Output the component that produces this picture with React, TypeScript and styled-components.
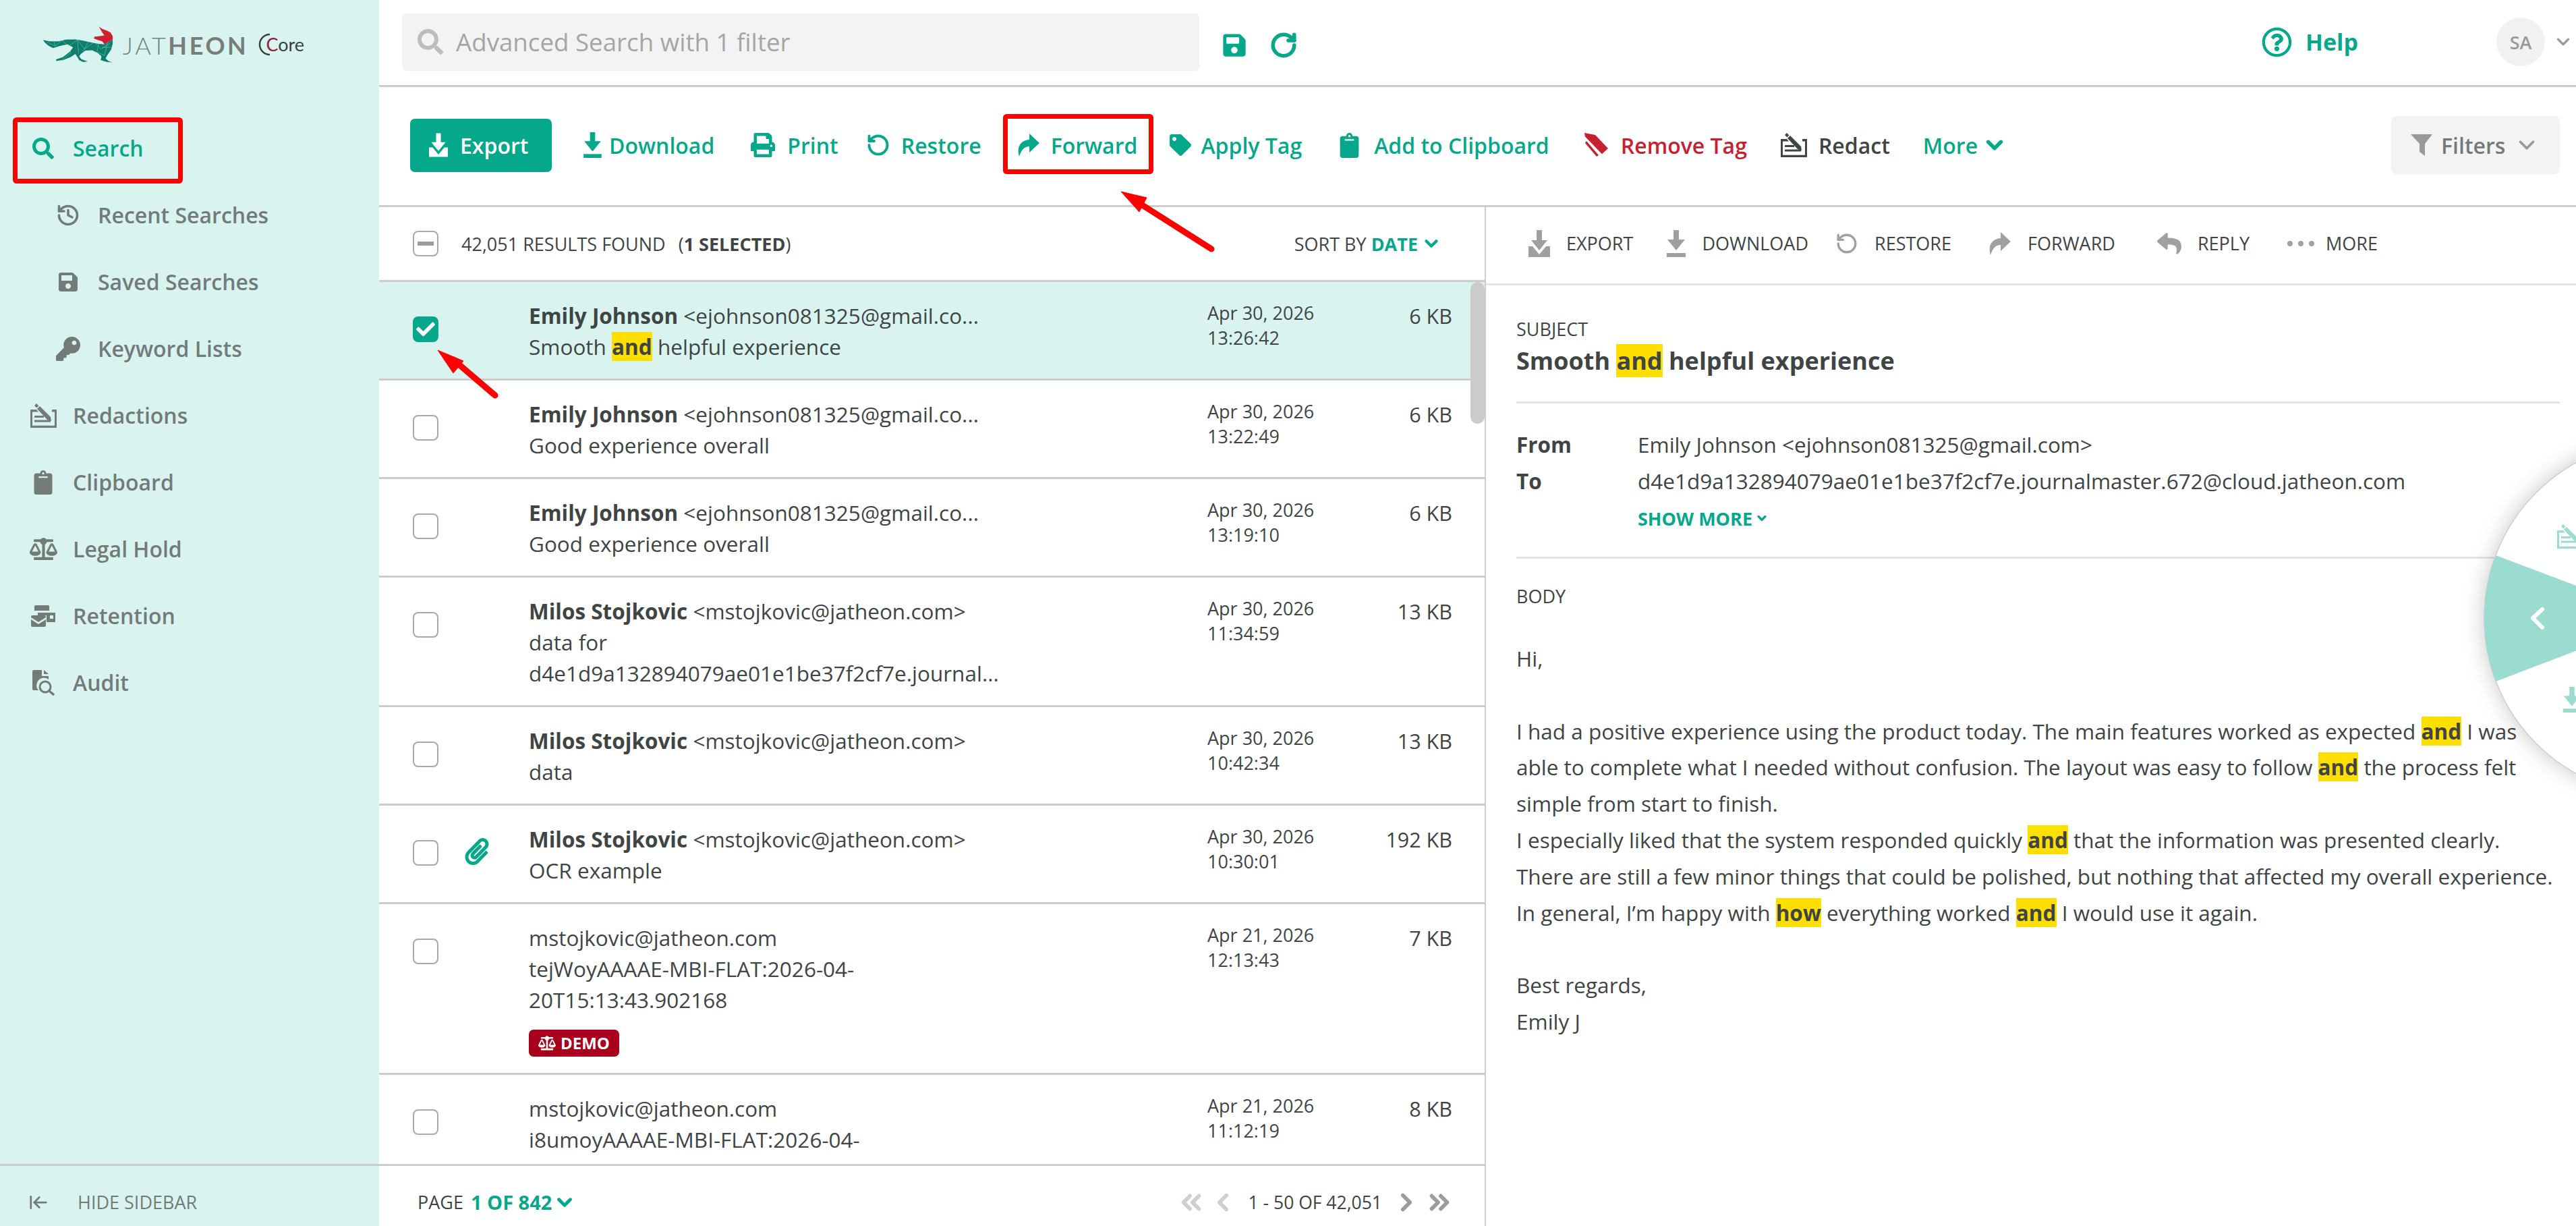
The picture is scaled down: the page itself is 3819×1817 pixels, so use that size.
import React from "react";
import styled, { createGlobalStyle } from "styled-components";
import {
  FaSearch, FaSave, FaKey, FaClipboard, FaBalanceScale, FaTag, FaPrint, FaReply,
  FaPaperclip, FaCheck, FaRegQuestionCircle,
} from "react-icons/fa";
import { History, RotateCcw, RotateCw, ChevronDown, ChevronLeft, ChevronRight, ChevronsLeft, ChevronsRight, ArrowLeftToLine } from "lucide-react";

const GREEN = "#05a88b";
const MINT = "#d9f4ef";
const LINE = "#cccccc";
const INK = "#3f4444";
const GRAY = "#737b7a";

const Global = createGlobalStyle`
  html, body { margin: 0; padding: 0; background: #fff; overflow: hidden; }
  body { font-family: "Open Sans", "Liberation Sans", sans-serif; color: ${INK}; }
  * { box-sizing: border-box; }
`;

type P = React.SVGProps<SVGSVGElement>;
const ExportIcon = (p: P) => (
  <svg viewBox="0 0 32 40" width="28" height="36" fill="currentColor" {...p}>
    <path d="M12 0h8v15h8L16 30 4 15h8z" />
    <path d="M0 24h6l10 12 10-12h6v16H0z" />
  </svg>
);
const DownloadIcon = (p: P) => (
  <svg viewBox="0 0 28 40" width="28" height="40" fill="currentColor" {...p}>
    <path d="M10 0h8v14h9L14 30 1 14h9z" />
    <rect x="0" y="34" width="28" height="6" />
  </svg>
);
const ForwardIcon = (p: P) => (
  <svg viewBox="0 0 33 36" width="33" height="36" fill="currentColor" {...p}>
    <path d="M2 35C-2 22 3 11 17 10V1l15 14-15 14v-9c-7 0-12 5-15 15z" />
  </svg>
);
const RedactIcon = (p: P) => (
  <svg viewBox="0 0 41 36" width="41" height="36" fill="currentColor" {...p}>
    <path d="M1 9h9l3 3.4H4v20.400h33V12.400h-4V9h7v27H1z" />
    <path d="M7 3l3-3 3.400 3.400-3 3zM11 8l4-4 16 16 1 6-6-2z" />
    <rect x="7" y="18" width="14" height="3" />
    <rect x="7" y="24.500" width="24" height="3" />
  </svg>
);
const RetentionIcon = (p: P) => (
  <svg viewBox="0 0 36 32" width="36" height="32" fill="currentColor" {...p}>
    <path d="M5 2a2 2 0 012-2h18a2 2 0 012 2v6H5z" />
    <path d="M10 11h26v14H23V15H10zM28 15v5h5v-5z" fillRule="evenodd" />
    <path d="M0 17a2 2 0 012-2h18a2 2 0 012 2v1l-11 7L0 18z" />
    <path d="M0 21l11 7 11-7v9a2 2 0 01-2 2H2a2 2 0 01-2-2z" />
  </svg>
);
const AuditIcon = (p: P) => (
  <svg viewBox="0 0 33 38" width="33" height="38" fill="currentColor" {...p}>
    <path d="M0 2a2 2 0 012-2h12v9h10v5A11 11 0 009 30H2a2 2 0 01-2-2z" />
    <path d="M17 0l7 6h-7z" />
    <circle cx="19" cy="25" r="8" fill="none" stroke="currentColor" strokeWidth="3" />
    <path d="M25 31l7 6" stroke="currentColor" strokeWidth="3.500" />
  </svg>
);
const RemoveTagIcon = (p: P) => (
  <svg viewBox="0 0 37 36" width="37" height="36" fill="currentColor" {...p}>
    <path d="M1 0l16 3 19 20-11 10L3 12z" />
    <path d="M0 7l28 29" stroke="#fff" strokeWidth="5" />
    <path d="M2 15l17 20 3-2L4 12z" />
  </svg>
);
const FilterIcon = (p: P) => (
  <svg viewBox="0 0 32 32" width="32" height="32" fill="currentColor" {...p}>
    <path d="M0 0h32L21 14v18l-8-6V14z" />
  </svg>
);
const FOX =
  "M60 102L90 108 130 108 165 100 205 99 240 105 270 112 300 118 335 122 372 100 372 120 365 145 345 175 340 185 355 197 373 203 345 200 318 192 322 175 305 160 280 148 250 150 230 165 222 175 232 188 260 198 240 201 222 192 212 175 205 165 185 178 150 192 120 196 118 190 150 178 180 155 195 135 170 122 140 128 105 138 85 128 70 115Z";
const FoxLogo = () => (
  <svg viewBox="50 35 330 175" width="110" height="58">
    <defs>
      <clipPath id="fox"><path d={FOX} /></clipPath>
    </defs>
    <g clipPath="url(#fox)">
      <rect x="50" y="35" width="330" height="175" fill="#0f7f6d" />
      <path d="M80 112l35 18 30-26 30 26 40-28 30 40 45-30 30 30 40-25M115 130l-6-22M175 130l10 30-40 30M215 102l5 60M265 108l-25 45M310 118l-10 45M350 112l-15 60 -30-15M365 135l-40 0" stroke="#7fcfc0" strokeWidth="1.600" fill="none" />
    </g>
    <path d="M310 42L325 52 345 60 362 68 372 85 372 100 335 122 325 108 305 102 288 95 290 88 315 85 335 82 325 68Z" fill="#d0202f" strokeLinejoin="round" />
  </svg>
);

const Root = styled.div`
  position: relative;
  display: flex;
  width: 3819px;
  height: 1817px;
  overflow: hidden;
  background: #fff;
`;

/* Sidebar */
const Sidebar = styled.aside`
  flex: 0 0 562px;
  display: flex;
  flex-direction: column;
  background: ${MINT};
`;
const Logo = styled.div`
  height: 170px;
  padding: 37px 0 0 60px;
  display: flex;
  align-items: flex-start;
`;
const Brand = styled.div`
  margin: 12px 0 0 12px;
  font-family: Lato, "Open Sans", sans-serif;
  font-size: 36px;
  line-height: 36px;
  letter-spacing: 3.6px;
  color: #777d7c;
  font-weight: 300;
  b { font-weight: 700; }
`;
const CoreMark = styled.div`
  position: relative;
  margin: 9px 0 0 12px;
  padding-left: 14px;
  font-family: Lato, "Open Sans", sans-serif;
  font-size: 27px;
  line-height: 40px;
  color: #3a3f40;
  i { font-style: normal; color: #8e2038; }
  svg { position: absolute; left: 0; top: 3px; }
`;
const Nav = styled.nav`
  flex: 1;
`;
const NavItem = styled.div<{ $sub?: boolean; $active?: boolean }>`
  height: 99px;
  display: flex;
  align-items: center;
  gap: 16px;
  padding-left: ${(p) => (p.$sub ? "73px" : "36px")};
  font-size: 32px;
  font-weight: 600;
  color: ${(p) => (p.$active ? GREEN : GRAY)};
`;
const NavIcon = styled.span`
  flex: 0 0 56px;
  display: flex;
  justify-content: center;
  align-items: center;
`;
const SideFoot = styled.div`
  height: 92px;
  border-top: 3px solid ${LINE};
  display: flex;
  align-items: center;
  gap: 43px;
  padding: 18px 0 0 42px;
  font-size: 27px;
  color: ${GRAY};
`;

/* Main */
const Main = styled.main`
  flex: 1;
  min-width: 0;
  display: flex;
  flex-direction: column;
`;
const Header = styled.header`
  flex: 0 0 129px;
  display: flex;
  align-items: center;
  padding: 0 4px 2px 34px;
  border-bottom: 3px solid ${LINE};
`;
const SearchBox = styled.div`
  width: 1182px;
  height: 85px;
  background: #f3f3f3;
  border-radius: 7px;
  display: flex;
  align-items: center;
  gap: 19px;
  padding-left: 23px;
  font-size: 36.700px;
  color: #a3a6a6;
  svg { color: #bdbdbd; }
`;
const HeadAction = styled.span<{ $ml: number }>`
  display: flex;
  margin: 10px 0 0 ${(p) => p.$ml}px;
  color: ${GREEN};
`;
const Help = styled.div`
  margin-left: auto;
  display: flex;
  align-items: center;
  gap: 20px;
  font-size: 34px;
  font-weight: 700;
  color: ${GREEN};
`;
const Avatar = styled.div`
  margin-left: 205px;
  width: 72px;
  height: 72px;
  border-radius: 50%;
  background: #f1f1f1;
  color: #999;
  font-size: 27px;
  font-weight: 600;
  display: flex;
  align-items: center;
  justify-content: center;
`;
const AvatarCaret = styled.span`
  display: flex;
  margin-left: 12px;
  color: #999;
`;

const Toolbar = styled.div`
  flex: 0 0 178px;
  display: flex;
  align-items: center;
  padding: 0 24px 3px 46px;
  border-bottom: 3px solid ${LINE};
`;
const ExportBtn = styled.div`
  width: 210px;
  height: 79px;
  border-radius: 7px;
  background: ${GREEN};
  color: #fff;
  font-size: 32px;
  font-weight: 600;
  display: flex;
  align-items: center;
  gap: 18px;
  padding-left: 28px;
`;
const Tool = styled.div<{ $ml: number; $tone?: string; $gap?: number }>`
  display: flex;
  align-items: center;
  gap: ${(p) => p.$gap ?? 18}px;
  margin-left: ${(p) => p.$ml}px;
  font-size: 32px;
  font-weight: 600;
  color: ${(p) => p.$tone || GREEN};
  white-space: nowrap;
`;
const FilterBtn = styled.div`
  margin-left: auto;
  width: 250px;
  height: 86px;
  border-radius: 8px;
  background: #f3f3f3;
  color: ${GRAY};
  font-size: 32px;
  font-weight: 600;
  display: flex;
  align-items: center;
  gap: 13px;
  padding-left: 29px;
  svg { color: #999; }
`;

const Panes = styled.div`
  flex: 1;
  min-height: 0;
  display: flex;
`;
const ListPane = styled.section`
  flex: 0 0 1641px;
  display: flex;
  flex-direction: column;
  border-right: 2px solid ${LINE};
`;
const ListHead = styled.div`
  flex: 0 0 111px;
  display: flex;
  align-items: center;
  padding: 0 64px 0 50px;
  border-bottom: 3px solid ${LINE};
  font-size: 27px;
`;
const CheckBox = styled.span<{ $on?: boolean }>`
  width: 38px;
  height: 38px;
  border-radius: 8px;
  display: flex;
  align-items: center;
  justify-content: center;
  border: ${(p) => (p.$on ? "none" : "2px solid #a9a9a9")};
  background: ${(p) => (p.$on ? GREEN : "#fff")};
  color: #fff;
`;
const Dash = styled.i`
  width: 24px;
  height: 6px;
  background: #9c9c9c;
`;
const Count = styled.div`
  margin-left: 34px;
  white-space: pre;
`;
const Selected = styled.span`
  margin-left: 5px;
  b { font-weight: 700; }
`;
const Sort = styled.div`
  margin-left: auto;
  display: flex;
  align-items: center;
  gap: 7px;
  b { font-weight: 700; color: ${GREEN}; }
  svg { color: ${GREEN}; margin-left: -2px; }
`;
const Rows = styled.div`
  position: relative;
  flex: 1;
  min-height: 0;
  overflow: hidden;
`;
const Row = styled.article<{ $on?: boolean }>`
  display: grid;
  grid-template-columns: 38px 134px 1006px 190px 1fr;
  padding: 27px 48px 24px 50px;
  border-bottom: 3px solid ${LINE};
  background: ${(p) => (p.$on ? MINT : "#fff")};
`;
const CheckCol = styled.div`
  padding-top: 24px;
`;
const AttachCol = styled.div`
  padding: 21px 0 0 37px;
  color: ${GREEN};
`;
const TextCol = styled.div`
  font-size: 31.500px;
  line-height: 46px;
`;
const Sender = styled.div`
  white-space: nowrap;
  b { font-weight: 700; }
`;
const Subject = styled.div`
  max-width: 710px;
  overflow-wrap: anywhere;
`;
const Hit = styled.mark`
  background: #ffdf00;
  color: ${INK};
  font-weight: 700;
`;
const Badge = styled.div`
  display: inline-flex;
  align-items: center;
  gap: 7px;
  height: 40px;
  margin-top: 21px;
  padding: 0 14px;
  border-radius: 7px;
  background: #a9001e;
  color: #fff;
  font-size: 24px;
  font-weight: 700;
  line-height: 40px;
  vertical-align: top;
`;
const DateCol = styled.div`
  font-size: 27px;
  line-height: 37px;
`;
const SizeCol = styled.div`
  text-align: right;
  font-size: 30.500px;
  line-height: 46px;
`;
const ScrollThumb = styled.div`
  position: absolute;
  right: 0;
  top: 0;
  width: 21px;
  height: 210px;
  border-radius: 11px;
  background: #cbcbcb;
`;
const ListFoot = styled.div`
  flex: 0 0 92px;
  border-top: 3px solid ${LINE};
  display: flex;
  align-items: center;
  padding: 18px 44px 0 57px;
  font-size: 27px;
`;
const PageNo = styled.b`
  margin: 0 2px 0 11px;
  font-size: 29px;
  font-weight: 700;
  color: ${GREEN};
`;
const Pager = styled.div`
  margin-left: auto;
  display: flex;
  align-items: center;
  font-size: 26.500px;
`;
const PagerIcon = styled.span<{ $off?: boolean; $ml?: number }>`
  display: flex;
  margin-left: ${(p) => p.$ml ?? 0}px;
  color: ${(p) => (p.$off ? "#cfcfcf" : "#9c9c9c")};
`;
const PagerRange = styled.span`
  margin-left: 17px;
`;

/* Detail */
const Detail = styled.section`
  position: relative;
  flex: 1;
  min-width: 0;
`;
const DetailHead = styled.div`
  height: 116px;
  display: flex;
  align-items: center;
  padding: 0 0 6px 63px;
  border-bottom: 3px solid #e5e5e5;
  font-size: 27px;
`;
const DTool = styled.div<{ $ml: number }>`
  display: flex;
  align-items: center;
  gap: 24px;
  margin-left: ${(p) => p.$ml}px;
  white-space: nowrap;
  svg { color: #a0a0a0; }
`;
const MoreLabel = styled.span`
  margin-left: -8px;
`;
const DetailBody = styled.div`
  padding: 0 24px 0 45px;
`;
const Section = styled.div`
  border-bottom: 3px solid #e5e5e5;
`;
const SubjectSec = styled(Section)`
  padding: 47px 0 35px;
`;
const Label = styled.div`
  font-size: 27px;
  line-height: 36px;
`;
const Title = styled.h1`
  margin: 4px 0 0;
  font-size: 36px;
  line-height: 50px;
  font-weight: 700;
`;
const MetaSec = styled(Section)`
  padding: 34px 0 37px;
`;
const Meta = styled.div`
  display: grid;
  grid-template-columns: 180px 1fr;
  font-size: 31.500px;
  line-height: 54px;
  b { font-weight: 700; }
`;
const ShowMore = styled.div`
  margin: 8px 0 0 180px;
  display: flex;
  align-items: center;
  gap: 4px;
  height: 40px;
  font-size: 27px;
  font-weight: 700;
  color: ${GREEN};
`;
const BodySec = styled.div`
  padding-top: 38px;
`;
const BodyText = styled.div`
  margin-top: 47px;
  font-size: 31.500px;
  line-height: 53.800px;
  white-space: nowrap;
`;

const Wheel = styled.svg`
  position: absolute;
  right: 0;
  top: 299px;
  overflow: hidden;
`;
const WheelDisc = styled.circle`
  fill: #fff;
  stroke: #cfcfcf;
  stroke-width: 1.500;
  filter: drop-shadow(0 0 16px rgba(0, 0, 0, 0.22));
`;
const Marks = styled.svg`
  position: absolute;
  inset: 0;
  pointer-events: none;
`;

const tools = [
  { ml: 47, gap: 11, icon: <DownloadIcon width={27} height={38} />, label: "Download" },
  { ml: 54, icon: <FaPrint size={36} />, label: "Print" },
  { ml: 41, gap: 16, icon: <RotateCcw size={36} strokeWidth={2.6} />, label: "Restore" },
  { ml: 54, gap: 16, icon: <ForwardIcon />, label: "Forward" },
  { ml: 48, gap: 14, icon: <FaTag size={32} />, label: "Apply Tag" },
  { ml: 52, icon: <FaClipboard size={37} />, label: "Add to Clipboard" },
  { ml: 51, icon: <RemoveTagIcon />, label: "Remove Tag", tone: "#c8202f" },
  { ml: 49, gap: 16, icon: <RedactIcon />, label: "Redact", tone: INK },
];

const dtools = [
  { ml: 0, icon: <ExportIcon width={32} height={40} />, label: "EXPORT" },
  { ml: 50, icon: <DownloadIcon />, label: "DOWNLOAD" },
  { ml: 40, icon: <RotateCcw size={34} strokeWidth={2.4} />, label: "RESTORE" },
  { ml: 56, icon: <ForwardIcon />, label: "FORWARD" },
  { ml: 62, icon: <FaReply size={36} />, label: "REPLY" },
];

type R = {
  name?: string; addr: string; subject: React.ReactNode; date: string; time: string; size: string;
  on?: boolean; clip?: boolean; demo?: boolean;
};
const rows: R[] = [
  { name: "Emily Johnson", addr: "<ejohnson081325@gmail.co...", subject: <>Smooth <Hit>and</Hit> helpful experience</>, date: "Apr 30, 2026", time: "13:26:42", size: "6 KB", on: true },
  { name: "Emily Johnson", addr: "<ejohnson081325@gmail.co...", subject: "Good experience overall", date: "Apr 30, 2026", time: "13:22:49", size: "6 KB" },
  { name: "Emily Johnson", addr: "<ejohnson081325@gmail.co...", subject: "Good experience overall", date: "Apr 30, 2026", time: "13:19:10", size: "6 KB" },
  { name: "Milos Stojkovic", addr: "<mstojkovic@jatheon.com>", subject: "data for d4e1d9a132894079ae01e1be37f2cf7e.journal...", date: "Apr 30, 2026", time: "11:34:59", size: "13 KB" },
  { name: "Milos Stojkovic", addr: "<mstojkovic@jatheon.com>", subject: "data", date: "Apr 30, 2026", time: "10:42:34", size: "13 KB" },
  { name: "Milos Stojkovic", addr: "<mstojkovic@jatheon.com>", subject: "OCR example", date: "Apr 30, 2026", time: "10:30:01", size: "192 KB", clip: true },
  { addr: "mstojkovic@jatheon.com", subject: "tejWoyAAAAE-MBI-FLAT:2026-04-20T15:13:43.902168", date: "Apr 21, 2026", time: "12:13:43", size: "7 KB", demo: true },
  { addr: "mstojkovic@jatheon.com", subject: "i8umoyAAAAE-MBI-FLAT:2026-04-20T14:10:10.097784", date: "Apr 21, 2026", time: "11:12:19", size: "8 KB" },
];

export default function App() {
  return (
    <Root>
      <Global />
      <Sidebar>
        <Logo>
          <FoxLogo />
          <Brand>JAT<b>HEON</b></Brand>
          <CoreMark>
            <svg width="22" height="34" viewBox="0 0 22 34"><path d="M20 2A15 15 0 0020 32" fill="none" stroke="#3a3f40" strokeWidth="2.500" /></svg>
            <i>C</i>ore
          </CoreMark>
        </Logo>
        <Nav>
          <NavItem $active><NavIcon><FaSearch size={32} /></NavIcon>Search</NavItem>
          <NavItem $sub><NavIcon><History size={36} strokeWidth={2.4} /></NavIcon>Recent Searches</NavItem>
          <NavItem $sub><NavIcon><FaSave size={32} /></NavIcon>Saved Searches</NavItem>
          <NavItem $sub><NavIcon><FaKey size={36} /></NavIcon>Keyword Lists</NavItem>
          <NavItem><NavIcon><RedactIcon /></NavIcon>Redactions</NavItem>
          <NavItem><NavIcon><FaClipboard size={36} /></NavIcon>Clipboard</NavItem>
          <NavItem><NavIcon><FaBalanceScale size={41} /></NavIcon>Legal Hold</NavItem>
          <NavItem><NavIcon><RetentionIcon /></NavIcon>Retention</NavItem>
          <NavItem><NavIcon><AuditIcon /></NavIcon>Audit</NavItem>
        </Nav>
        <SideFoot><ArrowLeftToLine size={30} strokeWidth={2.2} />HIDE SIDEBAR</SideFoot>
      </Sidebar>

      <Main>
        <Header>
          <SearchBox><FaSearch size={38} />Advanced Search with 1 filter</SearchBox>
          <HeadAction $ml={33}><FaSave size={38} /></HeadAction>
          <HeadAction $ml={33}><RotateCw size={42} strokeWidth={3.2} /></HeadAction>
          <Help><FaRegQuestionCircle size={45} />Help</Help>
          <Avatar>SA</Avatar>
          <AvatarCaret><ChevronDown size={30} strokeWidth={2.6} /></AvatarCaret>
        </Header>

        <Toolbar>
          <ExportBtn><ExportIcon />Export</ExportBtn>
          {tools.map((t) => (
            <Tool key={t.label} $ml={t.ml} $gap={t.gap} $tone={t.tone}>{t.icon}{t.label}</Tool>
          ))}
          <Tool $ml={49} $gap={6}>More<ChevronDown size={38} strokeWidth={3.4} /></Tool>
          <FilterBtn><FilterIcon />Filters<ChevronDown size={38} strokeWidth={2.4} /></FilterBtn>
        </Toolbar>

        <Panes>
          <ListPane>
            <ListHead>
              <CheckBox><Dash /></CheckBox>
              <Count>42,051 RESULTS FOUND  <Selected>(<b>1 SELECTED</b>)</Selected></Count>
              <Sort>SORT BY <b>DATE</b><ChevronDown size={30} strokeWidth={3.4} /></Sort>
            </ListHead>
            <Rows>
              {rows.map((r, i) => (
                <Row key={i} $on={r.on}>
                  <CheckCol>
                    <CheckBox $on={r.on}>{r.on && <FaCheck size={28} />}</CheckBox>
                  </CheckCol>
                  <AttachCol>{r.clip && <FaPaperclip size={40} />}</AttachCol>
                  <TextCol>
                    <Sender>{r.name && <b>{r.name} </b>}{r.addr}</Sender>
                    <Subject>{r.subject}</Subject>
                    {r.demo && <Badge><FaBalanceScale size={26} />DEMO</Badge>}
                  </TextCol>
                  <DateCol>{r.date}<br />{r.time}</DateCol>
                  <SizeCol>{r.size}</SizeCol>
                </Row>
              ))}
              <ScrollThumb />
            </Rows>
            <ListFoot>
              PAGE <PageNo>1 OF 842</PageNo>
              <ChevronDown size={34} strokeWidth={3.4} color={GREEN} />
              <Pager>
                <PagerIcon $off><ChevronsLeft size={46} strokeWidth={3} /></PagerIcon>
                <PagerIcon $off $ml={3}><ChevronLeft size={42} strokeWidth={3.2} /></PagerIcon>
                <PagerRange>1 - 50 OF 42,051</PagerRange>
                <PagerIcon $ml={15}><ChevronRight size={42} strokeWidth={3.2} /></PagerIcon>
                <PagerIcon $ml={5}><ChevronsRight size={46} strokeWidth={3} /></PagerIcon>
              </Pager>
            </ListFoot>
          </ListPane>

          <Detail>
            <DetailHead>
              {dtools.map((t) => (
                <DTool key={t.label} $ml={t.ml}>{t.icon}{t.label}</DTool>
              ))}
              <DTool $ml={55}>
                <svg width="42" height="10" viewBox="0 0 42 10" fill="currentColor"><circle cx="5" cy="5" r="4" /><circle cx="21" cy="5" r="4" /><circle cx="37" cy="5" r="4" /></svg>
                <MoreLabel>MORE</MoreLabel>
              </DTool>
            </DetailHead>
            <DetailBody>
              <SubjectSec>
                <Label>SUBJECT</Label>
                <Title>Smooth <Hit>and</Hit> helpful experience</Title>
              </SubjectSec>
              <MetaSec>
                <Meta><b>From</b><span>Emily Johnson &lt;ejohnson081325@gmail.com&gt;</span></Meta>
                <Meta><b>To</b><span>d4e1d9a132894079ae01e1be37f2cf7e.journalmaster.672@cloud.jatheon.com</span></Meta>
                <ShowMore>SHOW MORE<ChevronDown size={20} strokeWidth={4} /></ShowMore>
              </MetaSec>
              <BodySec>
                <Label>BODY</Label>
                <BodyText>
                  Hi,<br /><br />
                  I had a positive experience using the product today. The main features worked as expected <Hit>and</Hit> I was<br />
                  able to complete what I needed without confusion. The layout was easy to follow <Hit>and</Hit> the process felt<br />
                  simple from start to finish.<br />
                  I especially liked that the system responded quickly <Hit>and</Hit> that the information was presented clearly.<br />
                  There are still a few minor things that could be polished, but nothing that affected my overall experience.<br />
                  In general, I’m happy with <Hit>how</Hit> everything worked <Hit>and</Hit> I would use it again.<br /><br />
                  Best regards,<br />
                  Emily J
                </BodyText>
              </BodySec>
            </DetailBody>
            <Wheel width="340" height="620" viewBox="3479 606 340 620">
              <WheelDisc cx="3946" cy="916" r="263" />
              <path d="M3946 916L3700 823A263 263 0 0 0 3700 1010Z" fill="#9bdcd0" />
              <path d="M3769 903l-14 13 14 14" fill="none" stroke="#fff" strokeWidth="6" strokeLinecap="round" strokeLinejoin="round" />
              <RedactIcon x={3790} y={777} color="#9bdcd0" />
              <DownloadIcon x={3797} y={1018} color="#9bdcd0" width={32} height={38} />
            </Wheel>
          </Detail>
        </Panes>
      </Main>

      <Marks width="3819" height="1817" viewBox="0 0 3819 1817">
        <g fill="none" stroke="#ff0000" strokeWidth="7">
          <rect x="22.500" y="177.500" width="245" height="91" rx="2" />
          <rect x="1490.500" y="172.500" width="216" height="82" rx="2" />
        </g>
        <g fill="#ff0000" stroke="#ff0000">
          <path d="M1796 369L1692 303" strokeWidth="9" strokeLinecap="round" />
          <path d="M1662 284L1700 293 1689 314Z" strokeWidth="1" />
          <path d="M734 586L672 533" strokeWidth="9" strokeLinecap="round" />
          <path d="M649 519L687 535 672 553Z" strokeWidth="1" />
        </g>
      </Marks>
    </Root>
  );
}
